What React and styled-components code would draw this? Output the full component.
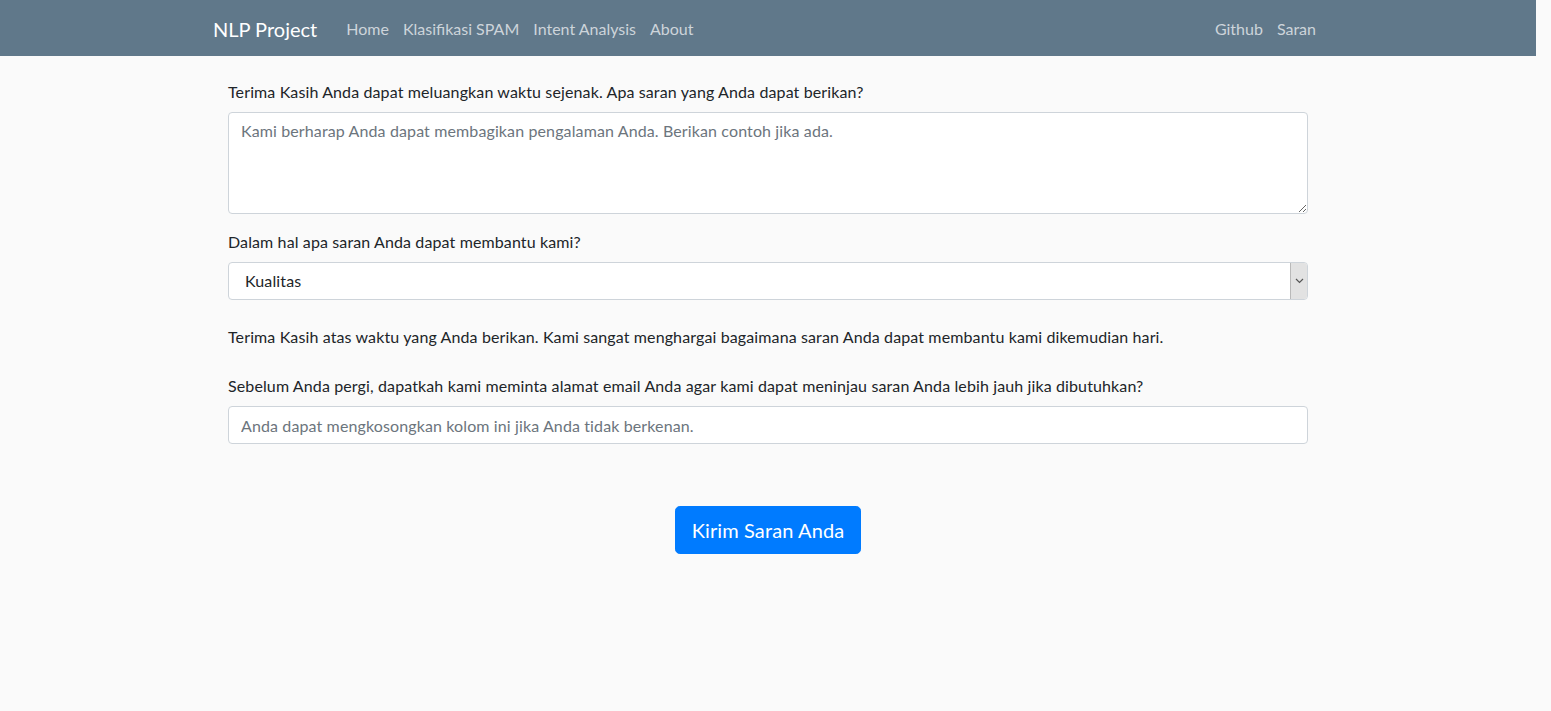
import styled, { createGlobalStyle } from 'styled-components'

const GlobalStyle = createGlobalStyle`
  html, body {
    margin: 0;
    padding: 0;
    background: #fafafa;
  }
  body {
    font-family: Lato, "Noto Sans", "Liberation Sans", sans-serif;
    font-size: 16px;
    line-height: 1.5;
    color: #212529;
  }
  * {
    box-sizing: border-box;
  }
`

const Page = styled.div`
  width: 1536px;
  min-height: 711px;
  background: #fafafa;
  letter-spacing: 0.12px;
`

const Nav = styled.nav`
  background: #60788a;
  height: 56px;
  letter-spacing: 0;
`

const NavContainer = styled.div`
  max-width: 1140px;
  height: 100%;
  margin: 0 auto;
  padding: 2px 15px 0;
  display: flex;
  align-items: center;
`

const Brand = styled.a`
  color: #fff;
  font-size: 20px;
  text-decoration: none;
  margin-right: 22px;
  white-space: nowrap;
`

const NavLinks = styled.ul`
  display: flex;
  list-style: none;
  margin: 0;
  padding: 0;
  margin-left: ${props => (props.$right ? 'auto' : '0')};
`

const NavLink = styled.a`
  display: block;
  padding: 8px 7px;
  color: #cdd4da;
  text-decoration: none;
  font-size: 16px;
`

const Main = styled.main`
  max-width: 1110px;
  margin: 0 auto;
  padding: 24px 15px 0;
`

const Form = styled.form`
  display: flex;
  flex-direction: column;
`

const Group = styled.div`
  margin-bottom: ${props => props.$mb || '16px'};
`

const Label = styled.label`
  display: block;
  margin-bottom: 8px;
`

const Text = styled.p`
  margin: 25px 0 25px;
`

const fieldBase = `
  display: block;
  width: 100%;
  font-family: inherit;
  font-size: 16px;
  line-height: 1.5;
  letter-spacing: inherit;
  color: #495057;
  background: #fff;
  border: 1px solid #ced4da;
  border-radius: 4px;
  padding: 6px 12px;
  outline: none;
  &::placeholder {
    color: #6c757d;
  }
`

const TextArea = styled.textarea`
  ${fieldBase}
  height: 102px;
  resize: vertical;
`

const Input = styled.input`
  ${fieldBase}
  height: 38px;
`

const SelectWrap = styled.div`
  position: relative;
`

const Select = styled.select`
  ${fieldBase}
  height: 38px;
  appearance: none;
  padding-left: 16px;
  color: #212529;
`

const Arrow = styled.span`
  position: absolute;
  top: 1px;
  right: 1px;
  bottom: 1px;
  width: 17px;
  background: #e2e2e2;
  border-left: 1px solid #b9b9b9;
  border-radius: 0 3px 3px 0;
  display: flex;
  align-items: center;
  justify-content: center;
  pointer-events: none;
`

const Actions = styled.div`
  display: flex;
  justify-content: center;
  margin-top: 62px;
`

const Button = styled.button`
  font-family: inherit;
  font-size: 20px;
  line-height: 1.5;
  letter-spacing: inherit;
  padding: 8px 16px;
  color: #fff;
  background: #007bff;
  border: 1px solid #007bff;
  border-radius: 4.8px;
  cursor: pointer;
`

export default function App() {
  return (
    <Page>
      <GlobalStyle />
      <Nav>
        <NavContainer>
          <Brand href="#">NLP Project</Brand>
          <NavLinks>
            <li><NavLink href="#">Home</NavLink></li>
            <li><NavLink href="#">Klasifikasi SPAM</NavLink></li>
            <li><NavLink href="#">Intent Analysis</NavLink></li>
            <li><NavLink href="#">About</NavLink></li>
          </NavLinks>
          <NavLinks $right>
            <li><NavLink href="#">Github</NavLink></li>
            <li><NavLink href="#">Saran</NavLink></li>
          </NavLinks>
        </NavContainer>
      </Nav>

      <Main>
        <Form onSubmit={e => e.preventDefault()}>
          <Group>
            <Label htmlFor="saran">Terima Kasih Anda dapat meluangkan waktu sejenak. Apa saran yang Anda dapat berikan?</Label>
            <TextArea
              id="saran"
              placeholder="Kami berharap Anda dapat membagikan pengalaman Anda. Berikan contoh jika ada."
            />
          </Group>

          <Group $mb="0">
            <Label htmlFor="kategori">Dalam hal apa saran Anda dapat membantu kami?</Label>
            <SelectWrap>
              <Select id="kategori" defaultValue="Kualitas">
                <option>Kualitas</option>
                <option>Fitur</option>
                <option>Tampilan</option>
                <option>Lainnya</option>
              </Select>
              <Arrow>
                <svg width="9" height="6" viewBox="0 0 9 6">
                  <path d="M1 1l3.5 3.5L8 1" fill="none" stroke="#555" strokeWidth="1.2" />
                </svg>
              </Arrow>
            </SelectWrap>
          </Group>

          <Text>
            Terima Kasih atas waktu yang Anda berikan. Kami sangat menghargai bagaimana saran Anda dapat membantu kami dikemudian hari.
          </Text>

          <Group $mb="0">
            <Label htmlFor="email">Sebelum Anda pergi, dapatkah kami meminta alamat email Anda agar kami dapat meninjau saran Anda lebih jauh jika dibutuhkan?</Label>
            <Input
              id="email"
              type="email"
              placeholder="Anda dapat mengkosongkan kolom ini jika Anda tidak berkenan."
            />
          </Group>

          <Actions>
            <Button type="submit">Kirim Saran Anda</Button>
          </Actions>
        </Form>
      </Main>
    </Page>
  )
}
